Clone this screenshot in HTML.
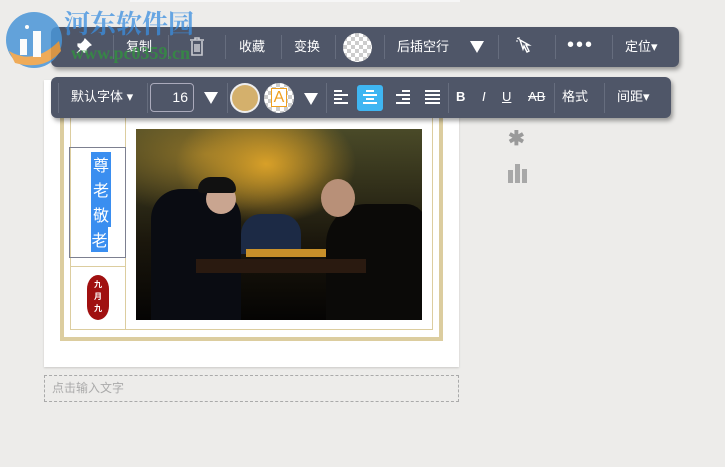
<!DOCTYPE html>
<html><head><meta charset="utf-8"><style>
*{margin:0;padding:0;box-sizing:border-box}
body{width:725px;height:467px;background:#edecea;position:relative;overflow:hidden;font-family:"Liberation Sans","Noto Sans CJK SC",sans-serif}
.abs{position:absolute}
.tb{position:absolute;background:#4f5668;border-radius:6px;box-shadow:2px 3px 4px rgba(0,0,0,.35);color:#fff;font-size:13px}
.tb span{position:absolute;white-space:nowrap;top:0!important;line-height:40px}
.sep{position:absolute;width:1px;background:#666d7e}
.tri{position:absolute;width:0;height:0;border-left:7px solid transparent;border-right:7px solid transparent;border-top:12px solid #fff}
.chk{background:repeating-conic-gradient(#ccc 0 25%,#fff 0 50%) 0 0/8px 8px;border-radius:50%;position:absolute}
</style></head><body>
<div class="abs" style="left:130px;top:0;width:330px;height:2px;background:#f6f6f6"></div>
<div class="abs" style="left:44px;top:80px;width:415px;height:287px;background:#fff;box-shadow:0 1px 2px rgba(0,0,0,.15)"></div>
<div class="abs" style="left:60px;top:100px;width:383px;height:241px;border:4px solid #dccd9f;border-top:none"></div>
<div class="abs" style="left:70px;top:110px;width:363px;height:220px;border:1px solid #dccd9f;border-top:none"></div>
<div class="abs" style="left:125px;top:110px;width:1px;height:220px;background:#dccd9f"></div>
<div class="abs" style="left:70px;top:266px;width:56px;height:1px;background:#dccd9f"></div>
<div class="abs" style="left:69px;top:147px;width:57px;height:111px;border:1px solid #7d8090"></div>
<div class="abs" style="left:91px;top:152px;width:20px;font-size:16px;line-height:25px;color:#fff;text-align:center;font-family:'Noto Sans CJK SC',sans-serif"><div style="background:#3a8ef0;height:25px">尊</div><div style="background:#3a8ef0;height:25px">老</div><div style="background:#3a8ef0;height:25px">敬</div><div style="background:#3a8ef0;width:17px;height:25px">老</div></div>
<div class="abs" style="left:87px;top:275px;width:22px;height:45px;background:#a01010;border-radius:11px/14px;color:#fff;font-size:8px;line-height:12px;text-align:center;padding-top:4px;font-weight:bold">九<br>月<br>九</div>
<div class="abs" style="left:136px;top:129px;width:286px;height:191px;overflow:hidden;background:radial-gradient(ellipse 90px 60px at 130px 35px,#d8a028,transparent),radial-gradient(ellipse 130px 60px at 70px 25px,#8a7028,transparent),linear-gradient(#4a4a28,#1a160c 60%,#050403)">
<div class="abs" style="left:15px;top:60px;width:90px;height:140px;background:#0a0c12;border-radius:30px 30px 0 0"></div>
<div class="abs" style="left:70px;top:55px;width:30px;height:30px;background:#c9a590;border-radius:50%"></div>
<div class="abs" style="left:62px;top:48px;width:38px;height:16px;background:#111;border-radius:14px 14px 4px 4px"></div>
<div class="abs" style="left:190px;top:75px;width:100px;height:130px;background:#0b0a08;border-radius:40px 20px 0 0"></div>
<div class="abs" style="left:185px;top:50px;width:34px;height:38px;background:#b89078;border-radius:50%"></div>
<div class="abs" style="left:105px;top:85px;width:60px;height:40px;background:#1c2a45;border-radius:20px 20px 0 0"></div>
<div class="abs" style="left:60px;top:130px;width:170px;height:14px;background:#2a1a10"></div>
<div class="abs" style="left:110px;top:120px;width:80px;height:8px;background:#c8902a"></div>
</div>
<div class="abs" style="left:44px;top:375px;width:415px;height:27px;border:1px dashed #aaa;color:#aaa;font-size:12px;padding:5px 7px;line-height:15px">点击输入文字</div>
<div class="abs" style="left:508px;top:126px;font-size:20px;color:#9a9a9a;font-weight:bold">✱</div>
<div class="abs" style="left:508px;top:170px;width:5px;height:13px;background:#a8a8a8"></div>
<div class="abs" style="left:515px;top:164px;width:5px;height:19px;background:#a8a8a8"></div>
<div class="abs" style="left:522px;top:169px;width:5px;height:14px;background:#a8a8a8"></div>
<div class="tb" style="left:51px;top:27px;width:628px;height:40px">
<svg class="abs" style="left:25px;top:11px" width="16" height="16" viewBox="0 0 16 16"><path d="M9 1l6 6-2 1-3 3 0 3-2 0-6 -6 0-2 3 0 3-3z M5 11l-4 4" fill="#fff" stroke="#fff" stroke-width="1.2"/></svg>
<div class="sep" style="left:62px;top:8px;height:24px"></div>
<span style="left:75px">复制</span>
<div class="sep" style="left:117px;top:8px;height:24px"></div>
<svg class="abs" style="left:138px;top:10px" width="16" height="19" viewBox="0 0 16 19"><path d="M1 3h14M6 3V1h4v2M3 4v14h10V4M6 7v8M8 7v8M10 7v8" fill="none" stroke="#c8cad0" stroke-width="1.6"/></svg>
<div class="sep" style="left:174px;top:8px;height:24px"></div>
<span style="left:188px">收藏</span>
<div class="sep" style="left:230px;top:8px;height:24px"></div>
<span style="left:243px">变换</span>
<div class="sep" style="left:284px;top:8px;height:24px"></div>
<div class="chk" style="left:292px;top:6px;width:29px;height:29px"></div>
<div class="sep" style="left:333px;top:8px;height:24px"></div>
<span style="left:346px">后插空行</span>
<div class="tri" style="left:419px;top:14px"></div>
<div class="sep" style="left:447px;top:8px;height:24px"></div>
<svg class="abs" style="left:465px;top:10px" width="18" height="20" viewBox="0 0 18 20"><path d="M4 3l3 9 1-3 3 6 2-1-3-6 3 0z" fill="none" stroke="#fff" stroke-width="1.4"/><path d="M1 1l2 1M3 0l0 2M0 4l2 0" stroke="#fff"/></svg>
<div class="sep" style="left:504px;top:8px;height:24px"></div>
<span style="left:516px;font-size:20px;letter-spacing:2px;line-height:36px!important">•••</span>
<div class="sep" style="left:561px;top:8px;height:24px"></div>
<span style="left:574px">定位▾</span>
</div>
<div class="tb" style="left:51px;top:77px;width:620px;height:41px">
<div class="sep" style="left:7px;top:6px;height:30px"></div>
<span style="left:20px">默认字体 ▾</span>
<div class="sep" style="left:96px;top:6px;height:30px"></div>
<div class="abs" style="left:99px;top:6px;width:44px;height:29px;border:1px solid #aab;border-radius:4px;text-align:right;padding:0 5px;line-height:27px;font-size:14px">16</div>
<div class="tri" style="left:153px;top:15px"></div>
<div class="sep" style="left:176px;top:6px;height:30px"></div>
<div class="abs" style="left:179px;top:6px;width:30px;height:30px;border-radius:50%;background:#d4b06c;border:2px solid #eee"></div>
<div class="chk" style="left:213px;top:6px;width:30px;height:30px"></div>
<div class="abs" style="left:220px;top:11px;width:16px;height:19px;border:1px solid #f0a020;color:#f0a020;font-size:16px;line-height:17px;text-align:center;background:#fff">A</div>
<div class="tri" style="left:253px;top:16px"></div>
<div class="sep" style="left:275px;top:6px;height:30px"></div>
<svg class="abs" style="left:283px;top:13px" width="15" height="15" viewBox="0 0 15 15"><path d="M0 1h8M0 5h14M0 9h8M0 13h14" stroke="#fff" stroke-width="2"/></svg>
<div class="abs" style="left:306px;top:8px;width:26px;height:26px;background:#3fb6f2;border-radius:3px"></div>
<svg class="abs" style="left:311px;top:13px" width="16" height="15" viewBox="0 0 16 15"><path d="M4 1h8M1 5h14M4 9h8M1 13h14" stroke="#fff" stroke-width="2"/></svg>
<svg class="abs" style="left:344px;top:13px" width="15" height="15" viewBox="0 0 15 15"><path d="M7 1h8M1 5h14M7 9h8M1 13h14" stroke="#fff" stroke-width="2"/></svg>
<svg class="abs" style="left:374px;top:13px" width="15" height="15" viewBox="0 0 15 15"><path d="M0 1h15M0 5h15M0 9h15M0 13h15" stroke="#fff" stroke-width="2"/></svg>
<div class="sep" style="left:397px;top:6px;height:30px"></div>
<span style="left:405px;font-weight:bold">B</span>
<span style="left:431px;font-style:italic">I</span>
<span style="left:451px;text-decoration:underline">U</span>
<span style="left:477px;text-decoration:line-through">AB</span>
<div class="sep" style="left:503px;top:6px;height:30px"></div>
<span style="left:511px">格式</span>
<div class="sep" style="left:553px;top:6px;height:30px"></div>
<span style="left:566px">间距▾</span>
</div>
<svg class="abs" style="left:5px;top:11px;opacity:.85" width="58" height="58" viewBox="0 0 58 58"><circle cx="29" cy="29" r="28" fill="#4a96d8"/><path d="M4 40 Q29 55 54 30 L56 40 Q40 60 10 52z" fill="#f0a040"/><rect x="15" y="28" width="7" height="16" fill="#fff"/><rect x="28" y="20" width="8" height="26" fill="#fff"/><circle cx="22" cy="16" r="2" fill="#fff"/></svg>
<div class="abs" style="left:64px;top:9px;font-size:26px;line-height:32px;font-weight:bold;color:#3a8ee0;font-family:'Liberation Serif','Noto Serif CJK SC',serif;opacity:.75">河东软件园</div>
<div class="abs" style="left:71px;top:42px;font-size:18px;line-height:22px;font-weight:bold;color:#2e9a3a;font-family:'Liberation Serif',serif;opacity:.7">www.pc0359.cn</div>
</body></html>
